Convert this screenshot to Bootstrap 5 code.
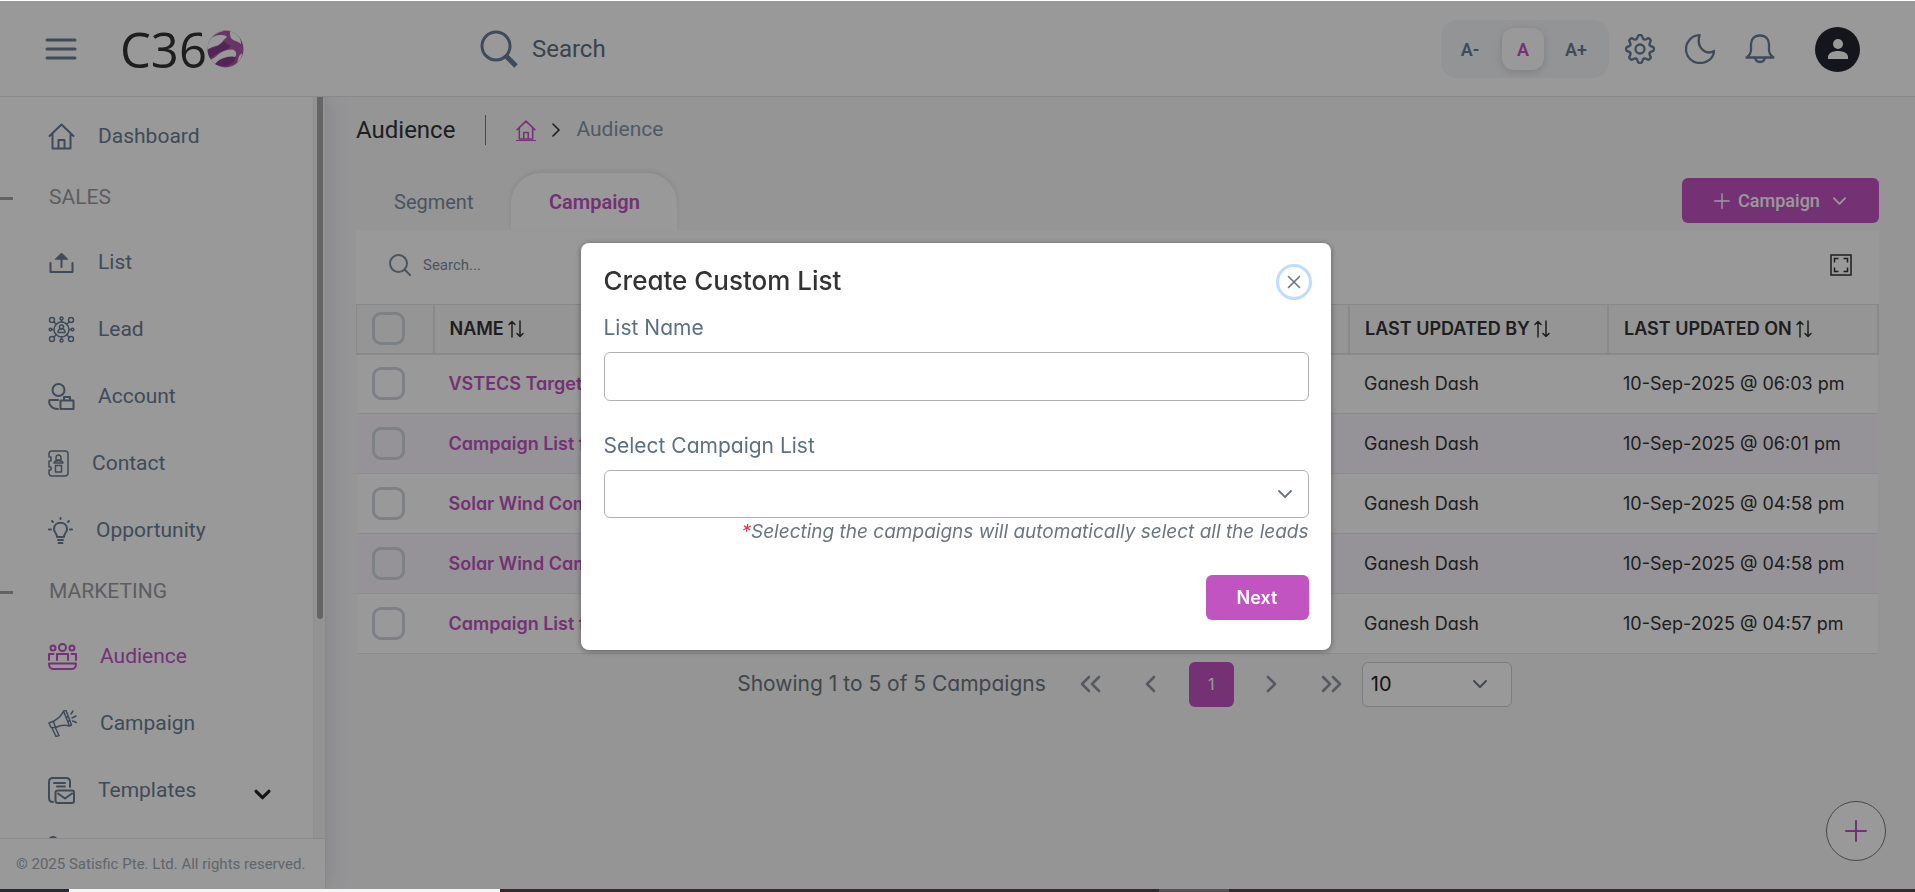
<!DOCTYPE html>
<html lang="en">
<head>
<meta charset="utf-8">
<meta name="viewport" content="width=device-width, initial-scale=1">
<title>C360 - Audience</title>
<link href="https://cdn.jsdelivr.net/npm/bootstrap@5.3.0/dist/css/bootstrap.min.css" rel="stylesheet">
<style>
:root{--brand:#c154c1;--slate:#6a7d93;--line:#e2e4e8}
body{font-family:Roboto,"Liberation Sans",sans-serif;background:#f8f8fb;color:#333;height:100vh;overflow:hidden}
svg{fill:none;stroke:currentColor;stroke-width:2;stroke-linecap:round;stroke-linejoin:round;flex-shrink:0;display:block}
a{color:inherit;text-decoration:none}
.ui-font{font-family:Inter,"Noto Sans",sans-serif;font-feature-settings:"cv11"}
.icon-btn{border:0;background:none;padding:0;color:inherit}
.center-grid{display:grid;place-items:center}

.topbar{height:97px;padding:2px 55px 0 45px;background:#fff;border-bottom:1px solid var(--line);color:var(--slate)}
.topbar .icon-btn svg{stroke-width:2.3}
.brand-logo{font:49px/60px "Open Sans","Noto Sans",sans-serif;color:#333;margin-left:43px}
.top-search{margin-left:236px;gap:14px}
.top-search input{border:0;background:none;font-size:24px;color:#5f7080;width:300px;padding:0;outline:0}
.top-search input::placeholder,.list-search input::placeholder{color:inherit;opacity:1}
.font-size-group{background:#f6f7fa;border-radius:16px;padding:8px 12px 8px 8px;gap:11px}
.font-size-group button{width:42px;height:42px;border:0;border-radius:12px;background:none;font-size:18px;font-weight:600;color:var(--slate)}
.font-size-group button.on{background:#fff;color:var(--brand);box-shadow:0 2px 8px rgba(0,0,0,.15)}
.tool-icons{gap:30px}
.avatar-btn{width:45px;height:45px;background:#24262e;color:#fff;border:0;border-radius:50%;padding:0;margin-left:40px}

.side{width:326px;background:#fff;border-right:1px solid var(--line);box-shadow:0 0 24px rgba(0,0,0,.12);font-size:21px;color:var(--slate)}
.side-scroll{overflow:hidden}
.side-nav{padding-top:6px}
.side-nav a{height:67px;padding-left:48px;padding-right:42px;gap:23px}
.side-nav .section-name{height:59px;padding-bottom:3px;gap:36px;color:#9a9ca3}
.section-name::before{content:"";width:13px;height:3px;background:#a4a6ab}
.side-track{width:12px;background:#f6f6f6;border-left:1px solid #eee;padding:0 3px}
.side-thumb{width:6px;height:522px;background:#a9a9a9;border-radius:0 0 3px 3px}
.side-foot{height:51px;border-top:1px solid var(--line);padding-left:16px;font-size:15px;color:#a2a8b1;white-space:nowrap}

.content-area{padding:13px 36px 0 30px}
.crumbs{height:40px}
.page-name{font-size:24px;font-weight:400}
.crumb-rule{width:1px;height:30px;background:var(--slate);margin:0 30px}
.home-link{color:var(--brand);border-bottom:1px solid}
.crumb-now{font-size:21px;color:#8796a5}
.tab-row{margin-top:23px;height:57px}
.tab-row a{font-size:20px;height:57px;padding:0 38px;color:#7f8d9b}
.tab-row a.on{background:#fff;color:var(--brand);font-weight:600;border-radius:30px 30px 0 0;box-shadow:0 -2px 4px rgba(0,0,0,.08);width:166px;padding:0}
.btn-brand{background:var(--brand);color:#fff;border-radius:6px;height:45px;font-size:18px;font-weight:500;border:0}
.btn-brand:hover{background:#a943a9;color:#fff}
.campaign-btn{width:197px;margin-top:5px}
.next-btn{min-width:103px;margin-top:29px;font-weight:600}
.list-search{height:74px;background:#fff;padding:0 27px 4px 33px;color:#7f8d9b}
.list-search input{border:0;background:none;font-size:15px;color:inherit;outline:0;padding:0}
.data-grid{table-layout:fixed;width:100%;font-size:18px;color:#333}
.data-grid th{height:49px;background:#f8f8f8;border:1px solid #e3e4e6;border-right-width:2px;border-bottom-width:2px;font-weight:600;padding:0 16px 0 15px;color:#333}
.data-grid td{height:60px;background:#fff;border-bottom:1px solid #e9e9ec;padding:0 15px;white-space:nowrap;overflow:hidden}
.data-grid tr:nth-child(even) td{background:#f9f6fd}
.data-grid td a{color:var(--brand);font-weight:600}
.data-grid .form-check-input{width:33px;height:33px;border:3px solid #d0d5dc;border-radius:9px;margin:0;display:block;background:none}
.data-grid svg{stroke-width:1.5}
.col-tick{width:77px}.col-by{width:259px}.col-on{width:270px}
.pager{height:60px;background:#f8f8f8;color:#6c757d;font-size:21px;border-radius:0 0 6px 6px;gap:15px;padding-left:14px}
.pager button{width:45px;height:45px;border:0;background:none;color:#9096a0}
.pager button svg{stroke-width:2.6}
.pager button.on{background:var(--brand);color:#fff;border-radius:6px;font-size:16px}
.pager button.last-page{width:38px;justify-items:start;padding:0 0 0 12px}
.chevron-select{appearance:none;background:#fff url("data:image/svg+xml,%3Csvg xmlns='http://www.w3.org/2000/svg' viewBox='0 0 14 14'%3E%3Cpath d='M1 4l6 6 6-6' fill='none' stroke='%236c757d' stroke-width='1.8' stroke-linecap='round' stroke-linejoin='round'/%3E%3C/svg%3E") no-repeat right 16px center/14px;border:1px solid #b1b1b3;border-radius:6px}
.page-size{width:150px;height:45px;border-color:#cfd1d5;background-position:right 24px center;font-size:20px;padding-left:8px;color:#222}
.add-fab{position:fixed;right:29px;bottom:31px;width:60px;height:60px;border:1px solid #777;border-radius:50%;background:#fff;color:var(--brand);padding:0}

.modal-backdrop{inset:1px 0 3px 0;width:auto;height:auto;--bs-backdrop-opacity:.4}
.custom-modal{inset:2px 4px 2px 0;width:auto;height:auto}
.custom-modal .modal-dialog{max-width:750px;min-height:100%;margin:0 auto}
.custom-modal .modal-content{border:0;border-radius:8px;padding:20px 22px 30px 23px;box-shadow:0 1px 6px rgba(0,0,0,.4);color:#6c757d}
.modal-name{font-size:26px;line-height:36px;font-weight:500;color:#333}
.close-ring{width:30px;height:30px;border:0;box-shadow:0 0 0 3px #bfdbfe;border-radius:50%;background:#fff;color:#6c757d;padding:0;margin-top:4px}
.custom-modal label{font-size:21px;line-height:32px;color:#5b7087;padding:5px 0 8px}
.custom-modal .form-control{height:49px;border:1px solid #b1b1b3;border-radius:6px}
.custom-modal select.form-control{height:48px}
.hint-line{font-size:19px;line-height:28px}
.task-strip{height:3px;background:#37282f;position:relative;z-index:1060}
</style>
</head>
<body class="d-flex flex-column">

<svg width="0" height="0" class="position-absolute" aria-hidden="true">
  <symbol id="i-home" viewBox="0 0 26 27"><path d="M1 13 13 1.500 25 13M4 11v14.500h18V11M10 25v-8h6v8"/></symbol>
  <symbol id="i-sort" viewBox="0 0 16 18"><path d="M4 17V1.500M1 4.500l3-3 3 3M12 1v15.500M9 13.500l3 3 3-3"/></symbol>
  <symbol id="i-find" viewBox="0 0 22 22"><circle cx="9.500" cy="9.500" r="8.500"/><path d="m15.500 15.500 5.500 5.500"/></symbol>
  <symbol id="i-down" viewBox="0 0 16 10"><path d="m2 2 6 6 6-6"/></symbol>
  <symbol id="i-plus" viewBox="0 0 22 22"><path d="M11 1v20M1 11h20"/></symbol>
</svg>

<header class="topbar d-flex align-items-center flex-shrink-0">
  <button class="icon-btn" aria-label="Menu"><svg width="32" height="24" viewBox="0 0 32 24"><path d="M2 3h28M2 12h28M2 21h28" stroke-width="3"/></svg></button>
  <a href="#" class="brand-logo d-flex align-items-center">C36
    <svg width="37" height="38" viewBox="0 0 37 38">
      <defs><clipPath id="ball"><ellipse cx="18.500" cy="19" rx="18" ry="18.500"/></clipPath></defs>
      <g clip-path="url(#ball)" stroke="none">
        <path fill="#ad5aa8" d="M0 0h37v38H0z"/>
        <path fill="#8a3f8c" d="M0 20c8-3 13-4 17-9 2 2 4 4 7 5-5 5-11 5-16 9l-6 4zM8 35c3-5 10-9 21-8-1 5-5 8-10 9z"/>
        <path fill="#fff" d="M0 13C3 8 8 5 13 5c3 0 5 0 7 2-4 3-6 8-11 9-4 1-7 2-9 4zM23 1c3 0 7 2 9 6 2 2 2 5 2 7-3-3-8-3-10-6-1-2-1-4-1-7zM3 30c6-2 8-7 14-9 4-1 8-3 11 0 2 2 1 5 0 6-6-1-9 0-14 2-4 2-5 4-7 6zM32 26l3-3c0 5-3 9-6 12 2-3 2-6 3-9zM3 10C7 4 12 2 17 1L8 0 1 6z"/>
      </g>
    </svg>
  </a>
  <div class="top-search d-flex align-items-center">
    <svg width="38" height="38" viewBox="0 0 38 38"><circle cx="16" cy="16" r="14" stroke-width="3"/><path d="m26 26 10 10" style="stroke-width:5;stroke-linecap:butt"/></svg>
    <input type="text" placeholder="Search" aria-label="Search">
  </div>
  <div class="font-size-group d-flex align-items-center ms-auto">
    <button class="p-0">A-</button><button class="on p-0">A</button><button class="p-0">A+</button>
  </div>
  <div class="tool-icons d-flex align-items-center ms-3">
    <button class="icon-btn" aria-label="Settings"><svg width="30" height="30" viewBox="0 0 30 30">
      <g id="lobe2"><path id="lobe" d="M11 5.300C11.800 5 12.400 4.600 12.500 3.400 12.600 1.800 13.400 1 15 1s2.400.8 2.500 2.400c.1 1.200.7 1.600 1.500 1.900"/><use href="#lobe" transform="rotate(45 15 15)"/></g>
      <use href="#lobe2" transform="rotate(90 15 15)"/><use href="#lobe2" transform="rotate(180 15 15)"/><use href="#lobe2" transform="rotate(270 15 15)"/><circle cx="15" cy="15" r="4.500"/></svg></button>
    <button class="icon-btn" aria-label="Dark mode"><svg width="30" height="30" viewBox="0 0 30 30"><path d="M14.500 1.200C6.500 1.500 1 8 1 15.200 1 22.800 7 29 15 29c7.500 0 13.600-5 14-12-8 4.500-18-3-14.500-15.800z"/></svg></button>
    <button class="icon-btn" aria-label="Notifications"><svg width="30" height="30" viewBox="0 0 30 30"><path d="M15 1.500c-6 0-9 4-9 9v5c0 3-1.500 6-4.500 8h27c-3-2-4.500-5-4.500-8v-5c0-5-3-9-9-9zM10 23.500c.5 3 2.500 4.500 5 4.500s4.500-1.500 5-4.500"/></svg></button>
  </div>
  <button class="avatar-btn center-grid" aria-label="Profile"><svg width="22" height="22" viewBox="0 0 22 22" style="stroke:none;fill:currentColor"><circle cx="11" cy="6" r="5"/><path d="M1 21v-2c0-4 5-6 10-6s10 2 10 6v2z"/></svg></button>
</header>

<div class="d-flex flex-grow-1 overflow-hidden">
  <aside class="side d-flex flex-column flex-shrink-0">
    <div class="d-flex flex-grow-1 overflow-hidden">
      <nav class="side-nav side-scroll flex-grow-1">
        <a href="#" class="d-flex align-items-center"><svg width="27" height="27"><use href="#i-home"/></svg>Dashboard</a>
        <div class="section-name d-flex align-items-center">SALES</div>
        <a href="#" class="d-flex align-items-center"><svg width="27" height="24" viewBox="0 0 26 24"><path d="M2 12v9h22v-9M13 16V7"/><path d="m7 8 6-6 6 6z" style="fill:currentColor;stroke-width:1"/></svg>List</a>
        <a href="#" class="d-flex align-items-center"><svg width="27" height="27" viewBox="0 0 26 27" style="stroke-width:1.500"><circle cx="13" cy="13.500" r="7.500"/><circle cx="13" cy="11" r="2"/><path d="M9.500 16.500c0-5 7-5 7 0zM13 4v2M13 21v2M3 13.500h2M21 13.500h2M5 5.500l3 3M21 5.500l-3 3M5 21.500l3-3M21 21.500l-3-3"/><circle cx="3.500" cy="4" r="2.500"/><circle cx="22.500" cy="4" r="2.500"/><circle cx="3.500" cy="23" r="2.500"/><circle cx="22.500" cy="23" r="2.500"/><circle cx="13" cy="2.500" r="1.500"/><circle cx="13" cy="24.500" r="1.500"/><circle cx="2" cy="13.500" r="1.300"/><circle cx="24" cy="13.500" r="1.300"/></svg>Lead</a>
        <a href="#" class="d-flex align-items-center"><svg width="27" height="27" viewBox="0 0 27 27"><circle cx="10.500" cy="7" r="6"/><path d="M10 17H2c-2 0-1 9 8 9M12.500 17.500h13v8.500h-13zM16 17.500V14h6v3.500"/></svg>Account</a>
        <a href="#" class="d-flex align-items-center"><svg width="21" height="27" viewBox="0 0 21 27" style="stroke-width:1.500"><path d="M1 7V4c0-2 1-3 3-3h13c2 0 3 1 3 3v19c0 2-1 3-3 3H4c-2 0-3-1-3-3v-3h2v-3H1v-6h2V7zM8 8c0-4 5-4 5 0v2H8zM6 13c0-3 9-3 9 0zM7.500 15.500h6V22h-6z"/></svg>Contact</a>
        <a href="#" class="d-flex align-items-center"><svg width="25" height="27" viewBox="0 0 25 27"><path d="M9 20c0-4-3-4-3-8 0-8.500 13-8.500 13 0 0 4-3 4-3 8zM10 23h5M10.500 26h4M12.500 1v1M4 4l1 1M21 4l-1 1M1 12.500h2M22 12.500h2"/></svg>Opportunity</a>
        <div class="section-name d-flex align-items-center">MARKETING</div>
        <a href="#" class="d-flex align-items-center" style="color:var(--brand)"><svg width="29" height="27" viewBox="0 0 29 27"><circle cx="14.500" cy="4.500" r="3.500"/><circle cx="5" cy="5" r="2.500"/><circle cx="24" cy="5" r="2.500"/><path d="M9 17v-6h11v6M1 17v-6h4.500M28 17v-6h-4.500M1 20.500h27c0 4-1 5.500-4 5.500H5c-3 0-4-1.500-4-5.500z"/></svg>Audience</a>
        <a href="#" class="d-flex align-items-center"><svg width="29" height="27" viewBox="0 0 29 27" style="stroke-width:1.500"><path d="M1 13l5-2C11 8 14 5 15.500 1l6 15c-5-1.500-9-1-14 1.500H3zM15.500 1l2.500-.5L23.500 15l-2 1M5.500 12l2 5M4 18l4 8.500 3-1L7.500 18M19 7c3 0 3 4 1.500 4M23 4l2-3M24 8l4-2M24.500 11l4 1.500"/></svg>Campaign</a>
        <a href="#" class="d-flex align-items-center"><svg width="27" height="27" viewBox="0 0 27 27"><path d="M5 25c-3 0-4-1-4-4V5c0-3 1-4 4-4h13c3 0 4 1 4 4v5M6 6h11M9 9.500h8M10 13.500h14c1.500 0 2 .5 2 2V24c0 1.500-.5 2-2 2H10c-1.500 0-2.500-.5-2.500-2v-8.500c0-1.500 1-2 2.500-2zM10 16.500l7 5 7-5"/></svg>Templates<svg class="ms-auto mt-2" width="17" height="11" style="color:#222;stroke-width:3"><use href="#i-down"/></svg></a>
        <a href="#" class="d-flex align-items-center" aria-label="Reports"><svg width="27" height="44" viewBox="0 0 27 44"><circle cx="5" cy="5" r="4"/></svg></a>
      </nav>
      <div class="side-track flex-shrink-0"><div class="side-thumb"></div></div>
    </div>
    <div class="side-foot d-flex align-items-center flex-shrink-0">© 2025 Satisfic Pte. Ltd. All rights reserved.</div>
  </aside>

  <main class="content-area flex-grow-1">
    <div class="crumbs d-flex align-items-center">
      <h1 class="page-name m-0">Audience</h1>
      <span class="crumb-rule"></span>
      <a href="#" class="home-link" aria-label="Home"><svg width="20" height="20"><use href="#i-home"/></svg></a>
      <svg class="ms-3 me-3" width="8" height="14" viewBox="0 0 8 14" style="stroke-width:1.600"><path d="m1 1 6 6-6 6"/></svg>
      <span class="crumb-now">Audience</span>
    </div>
    <div class="tab-row d-flex align-items-center">
      <a href="#" class="d-flex align-items-center">Segment</a>
      <a href="#" class="on d-flex align-items-center justify-content-center">Campaign</a>
      <button class="btn btn-brand campaign-btn ms-auto d-flex align-items-center justify-content-center gap-2 align-self-start"><svg width="16" height="16"><use href="#i-plus"/></svg>Campaign<svg class="ms-1" width="15" height="10"><use href="#i-down"/></svg></button>
    </div>
    <div class="list-search d-flex align-items-center gap-2">
      <svg width="22" height="22"><use href="#i-find"/></svg>
      <input class="ms-1" type="text" placeholder="Search..." aria-label="Search list">
      <button class="icon-btn ms-auto" style="color:#333" aria-label="Full screen"><svg width="22" height="22" viewBox="0 0 22 22" style="stroke-width:1.500;stroke-linecap:butt;stroke-linejoin:miter"><path d="M1 1h20v20H1zM4.500 8.500v-4h4M13.500 4.500h4v4M17.500 13.500v4h-4M8.500 17.500h-4v-4"/></svg></button>
    </div>
    <table class="data-grid ui-font">
      <thead><tr>
        <th class="col-tick"><input class="form-check-input" type="checkbox" aria-label="Select all"></th>
        <th><span class="d-flex align-items-center gap-1">NAME <svg width="16" height="18"><use href="#i-sort"/></svg></span></th>
        <th class="col-by"><span class="d-flex align-items-center gap-1">LAST UPDATED BY <svg width="16" height="18"><use href="#i-sort"/></svg></span></th>
        <th class="col-on"><span class="d-flex align-items-center gap-1">LAST UPDATED ON <svg width="16" height="18"><use href="#i-sort"/></svg></span></th>
      </tr></thead>
      <tbody>
        <tr><td><input class="form-check-input" type="checkbox" aria-label="Select row"></td><td><a href="#">VSTECS Target List</a></td><td>Ganesh Dash</td><td>10-Sep-2025 @ 06:03 pm</td></tr>
        <tr><td><input class="form-check-input" type="checkbox" aria-label="Select row"></td><td><a href="#">Campaign List for</a></td><td>Ganesh Dash</td><td>10-Sep-2025 @ 06:01 pm</td></tr>
        <tr><td><input class="form-check-input" type="checkbox" aria-label="Select row"></td><td><a href="#">Solar Wind Company</a></td><td>Ganesh Dash</td><td>10-Sep-2025 @ 04:58 pm</td></tr>
        <tr><td><input class="form-check-input" type="checkbox" aria-label="Select row"></td><td><a href="#">Solar Wind Campaign</a></td><td>Ganesh Dash</td><td>10-Sep-2025 @ 04:58 pm</td></tr>
        <tr><td><input class="form-check-input" type="checkbox" aria-label="Select row"></td><td><a href="#">Campaign List for</a></td><td>Ganesh Dash</td><td>10-Sep-2025 @ 04:57 pm</td></tr>
      </tbody>
    </table>
    <div class="pager ui-font d-flex align-items-center justify-content-center">
      <span class="me-2">Showing 1 to 5 of 5 Campaigns</span>
      <button class="center-grid" aria-label="First"><svg width="22" height="18" viewBox="0 0 22 18"><path d="M9 2 2 9l7 7M19 2l-7 7 7 7"/></svg></button>
      <button class="center-grid" aria-label="Previous"><svg width="12" height="18" viewBox="0 0 12 18"><path d="M9 2 2 9l7 7"/></svg></button>
      <button class="on center-grid">1</button>
      <button class="center-grid" aria-label="Next page"><svg width="12" height="18" viewBox="0 0 12 18"><path d="m3 2 7 7-7 7"/></svg></button>
      <button class="center-grid last-page" aria-label="Last"><svg width="22" height="18" viewBox="0 0 22 18"><path d="m2 2 7 7-7 7M12 2l7 7-7 7"/></svg></button>
      <select class="chevron-select page-size" aria-label="Rows per page"><option>10</option></select>
    </div>
    <button class="add-fab center-grid" aria-label="Add"><svg width="22" height="22"><use href="#i-plus"/></svg></button>
  </main>
</div>

<div class="modal-backdrop show"></div>
<div class="modal custom-modal show d-block" role="dialog" aria-labelledby="dlg-name">
  <div class="modal-dialog modal-dialog-centered">
    <form class="modal-content ui-font">
      <div class="d-flex align-items-start justify-content-between mb-2">
        <h2 class="modal-name m-0" id="dlg-name">Create Custom List</h2>
        <button type="button" class="close-ring center-grid" aria-label="Close"><svg width="14" height="14" viewBox="0 0 14 14" style="stroke-width:1.600"><path d="m1.500 1.500 11 11m0-11-11 11"/></svg></button>
      </div>
      <label for="list-name">List Name</label>
      <input id="list-name" class="form-control" type="text">
      <label for="campaign-list" class="mt-4">Select Campaign List</label>
      <select id="campaign-list" class="form-control chevron-select"><option></option></select>
      <div class="hint-line text-end fst-italic"><span class="text-danger">*</span>Selecting the campaigns will automatically select all the leads</div>
      <button type="button" class="btn btn-brand next-btn ms-auto px-4">Next</button>
    </form>
  </div>
</div>

<div class="task-strip d-flex flex-shrink-0">
  <div style="width:3.6%;background:#2a2a35"></div>
  <div style="width:22.5%;background:#f5f5f5"></div>
  <div style="width:34.4%"></div>
  <div style="width:3.7%;background:#5a4d53"></div>
</div>
<script src="https://cdn.jsdelivr.net/npm/bootstrap@5.3.0/dist/js/bootstrap.bundle.min.js"></script>
</body>
</html>
